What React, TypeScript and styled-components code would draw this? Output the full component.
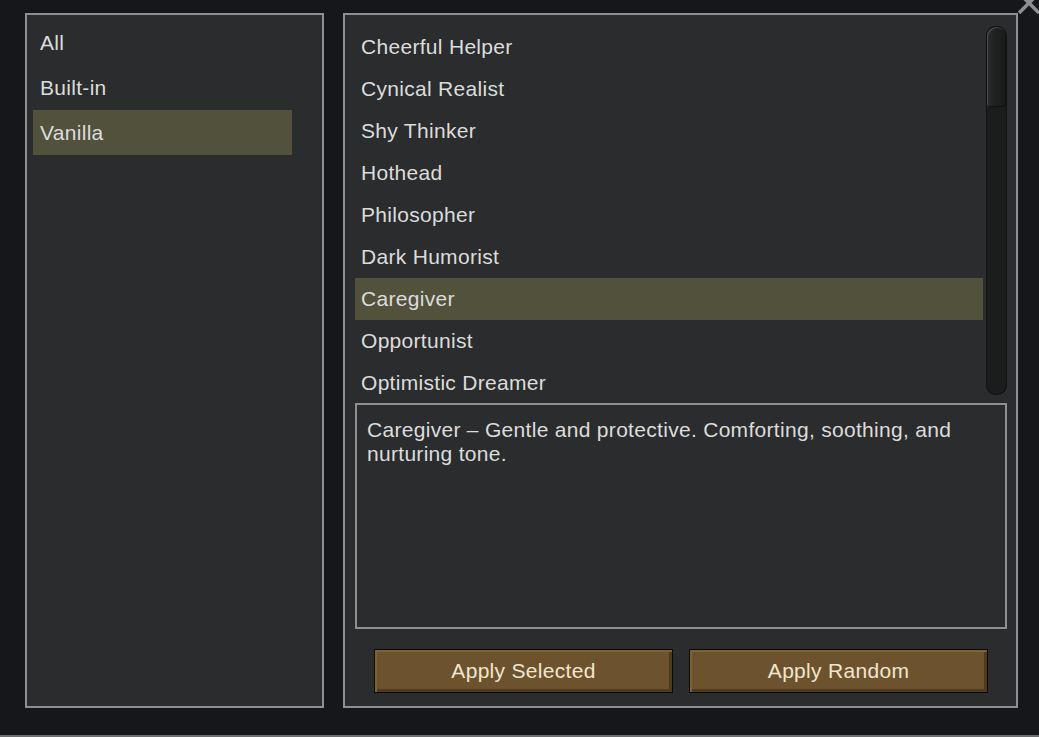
import { createGlobalStyle, styled } from "styled-components";

const GlobalStyle = createGlobalStyle`
  html, body {
    margin: 0;
    padding: 0;
    background: #15171b;
  }
  body {
    font-family: "Liberation Sans", Arial, sans-serif;
    letter-spacing: 0.3px;
    color: #dcdcdc;
  }
`;

const Window = styled.div`
  position: relative;
  width: 1039px;
  height: 737px;
  box-sizing: border-box;
  border-bottom: 2px solid #6c6e70;
  background: #15171b;
  overflow: hidden;
  display: flex;
  gap: 19px;
  padding: 13px 0 0 25px;
`;

const Panel = styled.div<{ $width: number }>`
  width: ${({ $width }) => $width}px;
  height: 695px;
  box-sizing: border-box;
  background: #2a2c2d;
  border: 2px solid #8d8f90;
  display: flex;
  flex-direction: column;
`;

const CategoryList = styled.div`
  display: flex;
  flex-direction: column;
  padding: 5px 0 0 6px;
`;

const CategoryItem = styled.div<{ $active?: boolean }>`
  width: 259px;
  height: 45px;
  box-sizing: border-box;
  padding-left: 7px;
  display: flex;
  align-items: center;
  font-size: 21px;
  background: ${({ $active }) => ($active ? "#52513b" : "transparent")};
`;

const RightBody = styled.div`
  flex: 1;
  display: flex;
  flex-direction: column;
  padding: 11px 9px 13px 10px;
`;

const ListArea = styled.div`
  display: flex;
  gap: 3px;
  height: 369px;
`;

const PresetList = styled.div`
  flex: 1;
  display: flex;
  flex-direction: column;
`;

const PresetItem = styled.div<{ $active?: boolean }>`
  height: 42px;
  flex-shrink: 0;
  box-sizing: border-box;
  padding-left: 6px;
  display: flex;
  align-items: center;
  font-size: 21px;
  background: ${({ $active }) => ($active ? "#52513b" : "transparent")};
`;

const ScrollTrack = styled.div`
  width: 21px;
  border-radius: 10px;
  background: #1b1d1d;
  box-shadow: inset 0 0 0 1px #111212;
  padding: 1px;
  box-sizing: border-box;
`;

const ScrollThumb = styled.div`
  height: 80px;
  border-radius: 10px 10px 4px 4px;
  background: linear-gradient(90deg, #2c2e2e 0%, #1f2121 40%, #1a1b1b 100%);
  box-shadow: inset 1px 1px 0 #4a4c4c, inset -1px -1px 0 #101111;
`;

const Description = styled.div`
  margin-top: 8px;
  height: 226px;
  box-sizing: border-box;
  border: 2px solid #8d8f90;
  padding: 13px 10px;
  font-size: 21px;
  line-height: 24px;
`;

const ButtonRow = styled.div`
  margin-top: 20px;
  display: flex;
  justify-content: center;
  gap: 16px;
`;

const ActionButton = styled.button`
  width: 299px;
  height: 44px;
  box-sizing: border-box;
  border: 1px solid #0c0a06;
  background: #6c532e;
  box-shadow: inset 2px 2px 0 #7d6238, inset -3px -3px 0 #4e3b1f;
  color: #f0e6cf;
  font-family: "Liberation Sans", Arial, sans-serif;
  letter-spacing: 0.3px;
  font-size: 21px;
  padding: 0;
  cursor: pointer;
`;

const CloseIcon = styled.svg`
  position: absolute;
  left: 1016px;
  top: -10px;
`;

const categories = ["All", "Built-in", "Vanilla"];

const presets = [
  "Cheerful Helper",
  "Cynical Realist",
  "Shy Thinker",
  "Hothead",
  "Philosopher",
  "Dark Humorist",
  "Caregiver",
  "Opportunist",
  "Optimistic Dreamer",
];

export default function App() {
  return (
    <>
      <GlobalStyle />
      <Window>
        <Panel $width={299}>
          <CategoryList>
            {categories.map((c) => (
              <CategoryItem key={c} $active={c === "Vanilla"}>
                {c}
              </CategoryItem>
            ))}
          </CategoryList>
        </Panel>
        <Panel $width={675}>
          <RightBody>
            <ListArea>
              <PresetList>
                {presets.map((p) => (
                  <PresetItem key={p} $active={p === "Caregiver"}>
                    {p}
                  </PresetItem>
                ))}
              </PresetList>
              <ScrollTrack>
                <ScrollThumb />
              </ScrollTrack>
            </ListArea>
            <Description>
              Caregiver – Gentle and protective. Comforting, soothing, and
              nurturing tone.
            </Description>
            <ButtonRow>
              <ActionButton type="button">Apply Selected</ActionButton>
              <ActionButton type="button">Apply Random</ActionButton>
            </ButtonRow>
          </RightBody>
        </Panel>
        <CloseIcon width="26" height="26" viewBox="0 0 26 26">
          <path
            d="M3 3 L23 23 M23 3 L3 23"
            stroke="#8d8f90"
            strokeWidth="3.5"
            fill="none"
          />
        </CloseIcon>
      </Window>
    </>
  );
}
